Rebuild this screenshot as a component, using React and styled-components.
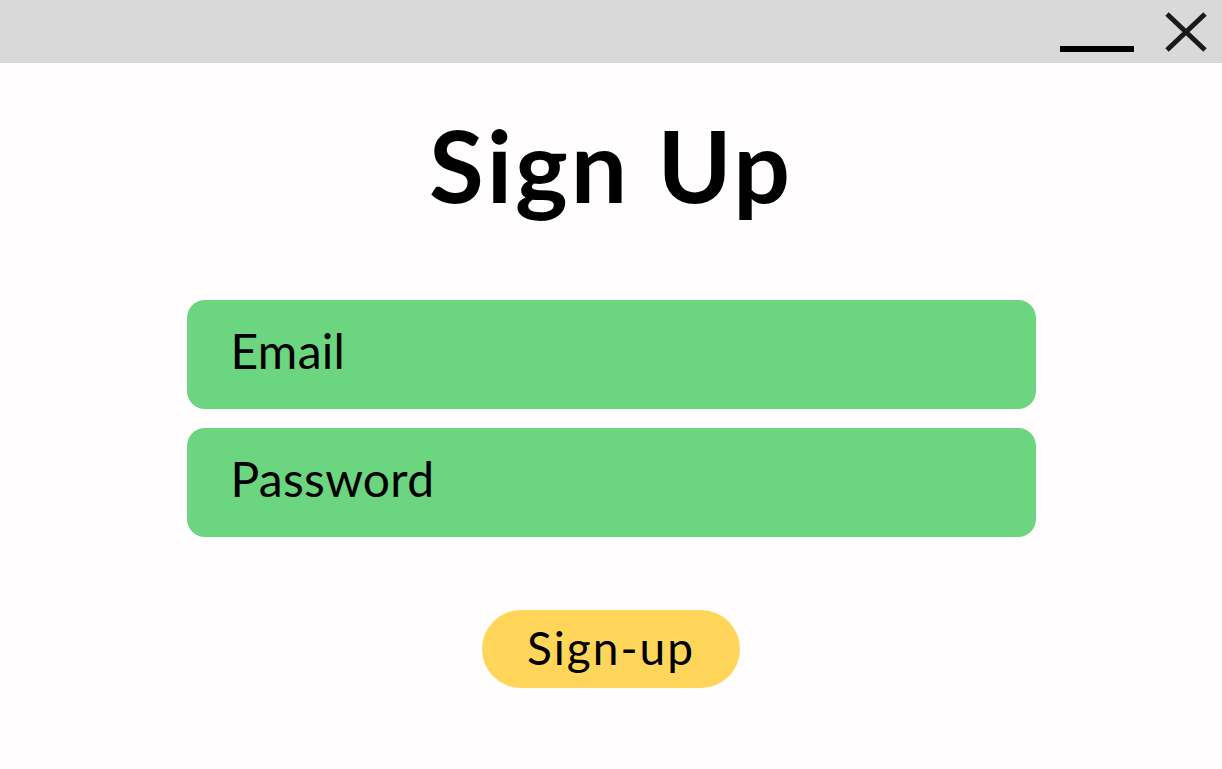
import React from "react";
import styled, { createGlobalStyle } from "styled-components";

const GlobalStyle = createGlobalStyle`
  html, body {
    margin: 0;
    padding: 0;
    background: #fffdfd;
  }
  body {
    font-family: "Lato", "Noto Sans", sans-serif;
  }
`;

const App = () => {
  return (
    <>
      <GlobalStyle />
      <Page>
        <TitleBar>
          <WindowButton aria-label="minimize">
            <svg width="76" height="40" viewBox="0 0 76 40">
              <rect x="1" y="34" width="74" height="6" fill="#000" />
            </svg>
          </WindowButton>
          <WindowButton aria-label="close">
            <svg width="46" height="40" viewBox="0 0 46 40">
              <path d="M4 2 L42 38 M42 2 L4 38" stroke="#1a1a1a" strokeWidth="5" />
            </svg>
          </WindowButton>
        </TitleBar>
        <Main>
          <Title>Sign Up</Title>
          <Form>
            <Field type="email" placeholder="Email" />
            <Field type="password" placeholder="Password" />
          </Form>
          <SubmitButton>Sign-up</SubmitButton>
        </Main>
      </Page>
    </>
  );
};

export default App;

const Page = styled.div`
  min-height: 100vh;
  display: flex;
  flex-direction: column;
`;

const TitleBar = styled.div`
  height: 63px;
  background-color: #d9d9d9;
  display: flex;
  justify-content: flex-end;
  align-items: flex-start;
  gap: 28px;
  padding: 12px 13px 0 0;
  box-sizing: border-box;
`;

const WindowButton = styled.button`
  background: none;
  border: none;
  padding: 0;
  cursor: pointer;
  display: block;
  svg {
    display: block;
  }
`;

const Main = styled.div`
  display: flex;
  flex-direction: column;
  align-items: center;
`;

const Title = styled.h1`
  margin: 51px 0 0;
  font-size: 100px;
  line-height: 1;
  font-weight: 700;
  letter-spacing: 3px;
  color: #000;
`;

const Form = styled.div`
  margin-top: 86px;
  display: flex;
  flex-direction: column;
  gap: 19px;
  width: 849px;
`;

const Field = styled.input`
  height: 109px;
  box-sizing: border-box;
  border: none;
  outline: none;
  border-radius: 18px;
  background-color: #6cd57f;
  padding: 0 0 8px 44px;
  font-family: "Lato", "Noto Sans", sans-serif;
  font-size: 48px;
  letter-spacing: 0.3px;
  color: #000;

  &::placeholder {
    color: #000;
    opacity: 1;
  }
`;

const SubmitButton = styled.button`
  margin-top: 73px;
  width: 258px;
  height: 78px;
  border: none;
  border-radius: 39px;
  background-color: #ffd65a;
  font-family: "Lato", "Noto Sans", sans-serif;
  font-size: 46px;
  letter-spacing: 2px;
  color: #000;
  padding: 0 0 4px;
  cursor: pointer;
`;
